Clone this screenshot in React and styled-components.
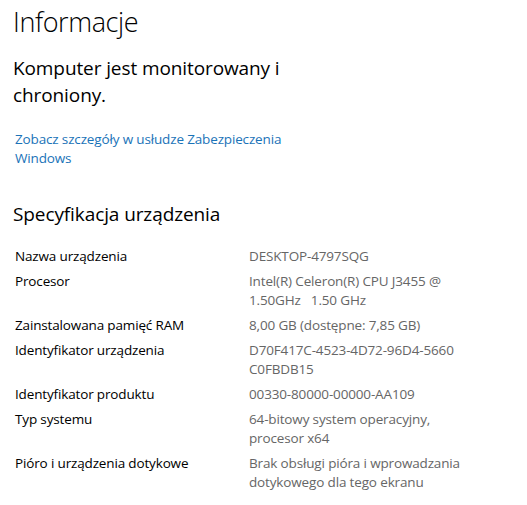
import React from 'react';
import styled, { createGlobalStyle } from 'styled-components';

const GlobalStyle = createGlobalStyle`
  body {
    margin: 0;
    background: #fff;
    font-family: "Open Sans", "Noto Sans", sans-serif;
    color: #000;
  }
`;

const Page = styled.div`
  padding: 2px 0 0 13px;
  width: 514px;
`;

const Title = styled.h1`
  margin: 0;
  font-size: 27px;
  font-weight: 300;
  letter-spacing: -0.4px;
  line-height: 40px;
`;

const Status = styled.p`
  margin: 13px 0 0;
  font-size: 19px;
  font-weight: 400;
  letter-spacing: -0.1px;
  line-height: 27px;
  width: 280px;
`;

const Link = styled.a`
  display: block;
  margin: 21px 0 0 2px;
  width: 280px;
  font-size: 13.5px;
  letter-spacing: -0.15px;
  line-height: 19px;
  color: #1a73b8;
  text-decoration: none;
`;

const SectionTitle = styled.h2`
  margin: 33px 0 0;
  font-size: 19px;
  font-weight: 400;
  letter-spacing: -0.1px;
  line-height: 27px;
`;

const SpecList = styled.dl`
  margin: 19px 0 0 2px;
  display: grid;
  grid-template-columns: 234px 210px;
  row-gap: 6px;
  font-size: 13.5px;
  letter-spacing: -0.15px;
  line-height: 19px;
`;

const Label = styled.dt`
  margin: 0;
  color: #000;
`;

const Value = styled.dd`
  margin: 0;
  color: #666;
`;

const ValueLine = styled.div`
  white-space: pre;
`;

const specs = [
  ['Nazwa urządzenia', ['DESKTOP-4797SQG']],
  ['Procesor', ['Intel(R) Celeron(R) CPU J3455 @', '1.50GHz   1.50 GHz']],
  ['Zainstalowana pamięć RAM', ['8,00 GB (dostępne: 7,85 GB)']],
  ['Identyfikator urządzenia', ['D70F417C-4523-4D72-96D4-5660', 'C0FBDB15']],
  ['Identyfikator produktu', ['00330-80000-00000-AA109']],
  ['Typ systemu', ['64-bitowy system operacyjny,', 'procesor x64']],
  ['Pióro i urządzenia dotykowe', ['Brak obsługi pióra i wprowadzania', 'dotykowego dla tego ekranu']],
];

export default function App() {
  return (
    <>
      <GlobalStyle />
      <Page>
        <Title>Informacje</Title>
        <Status>Komputer jest monitorowany i chroniony.</Status>
        <Link href="#">Zobacz szczegóły w usłudze Zabezpieczenia Windows</Link>
        <SectionTitle>Specyfikacja urządzenia</SectionTitle>
        <SpecList>
          {specs.map(([label, lines]) => (
            <React.Fragment key={label}>
              <Label>{label}</Label>
              <Value>
                {lines.map((l, i) => (
                  <ValueLine key={i}>{l}</ValueLine>
                ))}
              </Value>
            </React.Fragment>
          ))}
        </SpecList>
      </Page>
    </>
  );
}
